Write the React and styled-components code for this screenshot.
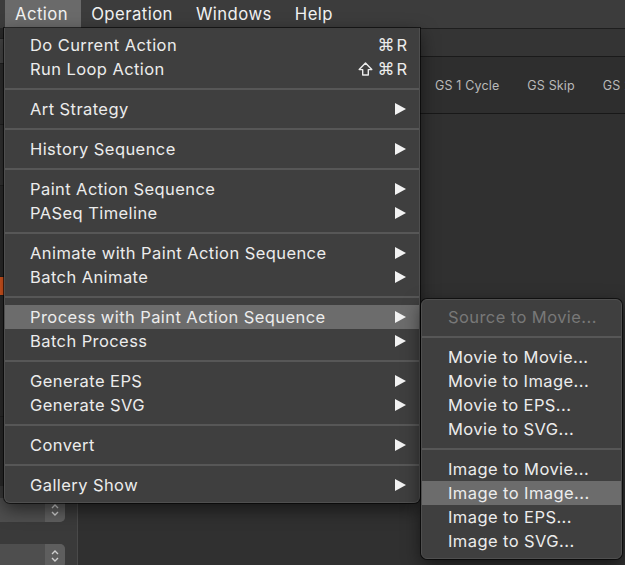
import React from 'react';
import styled, { createGlobalStyle, css } from 'styled-components';

const GlobalStyle = createGlobalStyle`
  html, body {
    margin: 0;
    padding: 0;
    background: #2d2d2d;
  }
  body {
    font-family: Inter, "Liberation Sans", "DejaVu Sans", sans-serif;
  }
`;

const Screen = styled.div`
  position: relative;
  width: 625px;
  height: 565px;
  overflow: hidden;
  display: flex;
  flex-direction: column;
  background: #2d2d2d;
`;

const MenuBar = styled.div`
  height: 28px;
  flex: none;
  display: flex;
  align-items: stretch;
  padding-left: 5px;
  background: #3c3c3c;
`;

const MenuTitle = styled.div`
  display: flex;
  align-items: center;
  padding: 0 13px 0 10px;
  font-size: 16.7px;
  letter-spacing: 0.45px;
  color: #f2f2f2;
  background: ${(p) => (p.$open ? '#6a6a6a' : 'transparent')};
`;

const Workspace = styled.div`
  flex: 1;
  display: flex;
  min-height: 0;
`;

const LeftPanel = styled.div`
  width: 77px;
  flex: none;
  display: flex;
  flex-direction: column;
  background: #2b2b2b;
  border-right: 1px solid #4a4a4a;
`;

const PanelRow = styled.div`
  height: ${(p) => p.$h}px;
  flex: none;
  background: ${(p) => p.$bg};
  border-bottom: 1px solid #222;
`;

const PanelFoot = styled.div`
  margin-top: auto;
  display: flex;
  flex-direction: column;
  gap: 22px;
  padding: 12px 0 0;
  margin-bottom: -3px;
  background: #3a3a3a;
`;

const Select = styled.div`
  height: 24px;
  margin: 0 12px 0 -6px;
  display: flex;
  justify-content: flex-end;
  border-radius: 5px;
  background: #4e4e4e;
  overflow: hidden;
`;

const Stepper = styled.div`
  width: 20px;
  display: flex;
  align-items: center;
  justify-content: center;
  background: #5e5e5e;
`;

const MainArea = styled.div`
  flex: 1;
  display: flex;
  flex-direction: column;
  min-width: 0;
  background: #1c1c1c;
`;

const HeaderStrip = styled.div`
  height: 27px;
  flex: none;
  background: #343434;
  border-top: 1px solid #1e1e1e;
  border-bottom: 1px solid #1a1a1a;
`;

const Toolbar = styled.div`
  height: 56px;
  flex: none;
  display: flex;
  align-items: center;
  gap: 28px;
  padding-left: 357px;
  background: #2e2e2e;
  border-bottom: 1px solid #181818;
  white-space: nowrap;
  overflow: hidden;
`;

const ToolButton = styled.span`
  flex: none;
  font-size: 12.5px;
  letter-spacing: 0.15px;
  color: #b9b9b9;
`;

const Canvas = styled.div`
  flex: 1;
  background: #303030;
`;

const Menu = styled.div`
  position: absolute;
  left: ${(p) => p.$x}px;
  top: ${(p) => p.$y}px;
  width: ${(p) => p.$w}px;
  padding: 5px 0;
  background: #3f3f3f;
  border: 1px solid #4f4f4f;
  border-radius: ${(p) => (p.$sub ? '6px' : '0 0 6px 6px')};
  box-shadow: 0 6px 18px rgba(0, 0, 0, 0.55), 0 0 0 1px rgba(0, 0, 0, 0.6);
  box-sizing: border-box;
  ${(p) => !p.$sub && css`border-top: none;`}
`;

const Item = styled.div`
  height: 24px;
  display: flex;
  align-items: center;
  padding: 0 12px 0 ${(p) => (p.$sub ? 26 : 25)}px;
  font-size: 16.5px;
  letter-spacing: 0.42px;
  color: ${(p) => (p.$disabled ? '#787878' : '#ececec')};
  background: ${(p) => (p.$active ? '#6c6c6c' : 'transparent')};
  white-space: nowrap;
`;

const Label = styled.span`
  flex: 1;
`;

const Shortcut = styled.span`
  display: flex;
  align-items: center;
  gap: 2px;
  letter-spacing: 0;
  color: #ececec;
`;

const KeySymbol = styled.span`
  font-family: "DejaVu Sans", sans-serif;
  font-size: 17px;
  line-height: 1;
`;

const Separator = styled.div`
  height: 2px;
  margin: 7px 0;
  background: #575757;
`;

const Arrow = () => (
  <svg width="11" height="12" viewBox="0 0 11 12" style={{ marginRight: 1 }}>
    <path d="M0 0 L11 6 L0 12 Z" fill="#f2f2f2" />
  </svg>
);

// outline shift key glyph, as drawn in macOS menus
const ShiftIcon = () => (
  <svg width="15" height="14" viewBox="0 0 15 14" style={{ marginRight: 2 }}>
    <path
      d="M7.5 1 L13.8 7.6 H10.3 V13 H4.7 V7.6 H1.2 Z"
      fill="none"
      stroke="#ececec"
      strokeWidth="1.4"
      strokeLinejoin="round"
    />
  </svg>
);

const Chevrons = () => (
  <svg width="10" height="16" viewBox="0 0 10 16">
    <path d="M2 6 L5 3 L8 6 M2 10 L5 13 L8 10" fill="none" stroke="#d0d0d0" strokeWidth="1.4" />
  </svg>
);

const mainMenu = [
  [
    { label: 'Do Current Action', shortcut: true },
    { label: 'Run Loop Action', shortcut: true, shift: true },
  ],
  [{ label: 'Art Strategy', sub: true }],
  [{ label: 'History Sequence', sub: true }],
  [
    { label: 'Paint Action Sequence', sub: true },
    { label: 'PASeq Timeline', sub: true },
  ],
  [
    { label: 'Animate with Paint Action Sequence', sub: true },
    { label: 'Batch Animate', sub: true },
  ],
  [
    { label: 'Process with Paint Action Sequence', sub: true, active: true },
    { label: 'Batch Process', sub: true },
  ],
  [
    { label: 'Generate EPS', sub: true },
    { label: 'Generate SVG', sub: true },
  ],
  [{ label: 'Convert', sub: true }],
  [{ label: 'Gallery Show', sub: true }],
];

const subMenu = [
  [{ label: 'Source to Movie...', disabled: true }],
  [
    { label: 'Movie to Movie...' },
    { label: 'Movie to Image...' },
    { label: 'Movie to EPS...' },
    { label: 'Movie to SVG...' },
  ],
  [
    { label: 'Image to Movie...' },
    { label: 'Image to Image...', active: true },
    { label: 'Image to EPS...' },
    { label: 'Image to SVG...' },
  ],
];

const renderGroups = (groups, isSub) =>
  groups.map((group, gi) => (
    <React.Fragment key={gi}>
      {gi > 0 && <Separator />}
      {group.map((it) => (
        <Item key={it.label} $sub={isSub} $active={it.active} $disabled={it.disabled}>
          <Label>{it.label}</Label>
          {it.shortcut && (
            <Shortcut>
              {it.shift && <ShiftIcon />}
              <KeySymbol>⌘</KeySymbol>
              <span>R</span>
            </Shortcut>
          )}
          {it.sub && <Arrow />}
        </Item>
      ))}
    </React.Fragment>
  ));

const App = () => (
  <Screen>
    <GlobalStyle />
    <MenuBar>
      <MenuTitle $open>Action</MenuTitle>
      <MenuTitle>Operation</MenuTitle>
      <MenuTitle>Windows</MenuTitle>
      <MenuTitle>Help</MenuTitle>
    </MenuBar>
    <Workspace>
      <LeftPanel>
        <PanelRow $h={10} $bg="#2a2a2a" />
        <PanelRow $h={24} $bg="#474747" />
        <PanelRow $h={60} $bg="#2e2e2e" />
        <PanelRow $h={60} $bg="#333333" />
        <PanelRow $h={90} $bg="#2c2c2c" />
        <PanelRow $h={18} $bg="#e0591f" />
        <PanelRow $h={120} $bg="#2c2c2c" />
        <PanelFoot>
          <Select><Stepper><Chevrons /></Stepper></Select>
          <Select><Stepper><Chevrons /></Stepper></Select>
        </PanelFoot>
      </LeftPanel>
      <MainArea>
        <HeaderStrip />
        <Toolbar>
          <ToolButton>GS 1 Cycle</ToolButton>
          <ToolButton>GS Skip</ToolButton>
          <ToolButton>GS 2 Cycle</ToolButton>
        </Toolbar>
        <Canvas />
      </MainArea>
    </Workspace>

    <Menu $x={4} $y={28} $w={416}>
      {renderGroups(mainMenu, false)}
    </Menu>
    <Menu $sub $x={421} $y={299} $w={201}>
      {renderGroups(subMenu, true)}
    </Menu>
  </Screen>
);

export default App;
